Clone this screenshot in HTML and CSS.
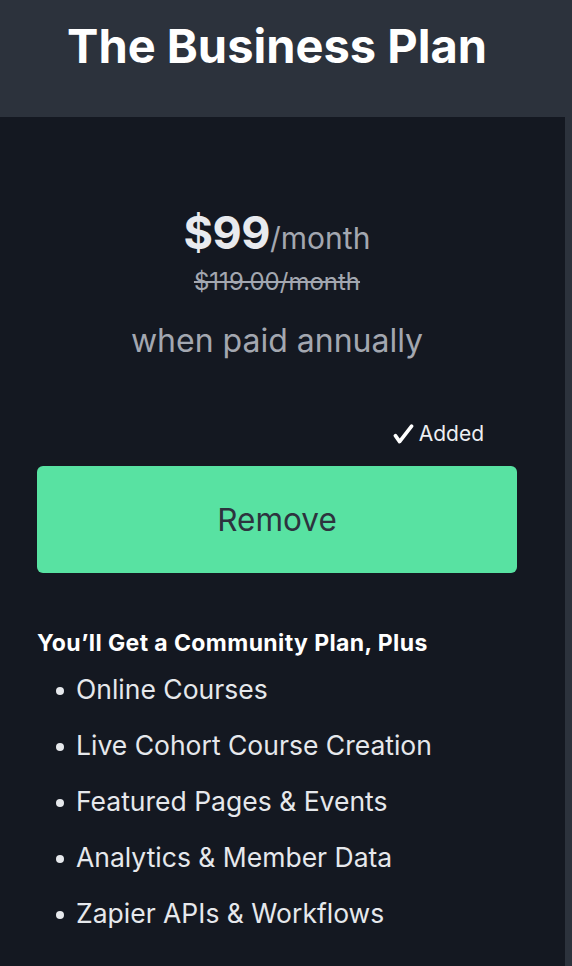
FILE: index.html
```html
<!DOCTYPE html>
<html>
<head>
<meta charset="utf-8">
<link rel="stylesheet" href="styles.css">
</head>
<body>
<div class="page">
  <header class="header">
    <h1 class="title">The Business Plan</h1>
  </header>
  <main class="card">
    <div class="content">
      <div class="price"><span class="amount">$99</span><span class="per">/month</span></div>
      <div class="old">$119.00/month</div>
      <div class="annual">when paid annually</div>
      <div class="added"><svg class="check" viewBox="0 0 21 20" width="21" height="20"><path d="M2.4 11.6 L6.6 17.6 L18.6 2.2" fill="none" stroke="#ffffff" stroke-width="3.6" stroke-linecap="round" stroke-linejoin="round"/></svg><span>Added</span></div>
      <button class="remove">Remove</button>
      <h2 class="plus">You’ll Get a Community Plan, Plus</h2>
      <ul class="features">
        <li>Online Courses</li>
        <li>Live Cohort Course Creation</li>
        <li>Featured Pages &amp; Events</li>
        <li>Analytics &amp; Member Data</li>
        <li>Zapier APIs &amp; Workflows</li>
      </ul>
    </div>
  </main>
</div>
</body>
</html>
```

FILE: styles.css
```css
html, body {
  margin: 0;
  padding: 0;
  background: #2c323c;
}
body {
  font-family: Inter, "Noto Sans", sans-serif;
  width: 572px;
  height: 966px;
  overflow: hidden;
}
.page {
  display: flex;
  flex-direction: column;
}
.header {
  height: 117px;
  box-sizing: border-box;
  padding-top: 18px;
  background: #2c323c;
}
.title {
  width: 480px;
  margin: 0 0 0 37px;
  text-align: center;
  font-size: 47px;
  font-weight: 700;
  color: #ffffff;
  line-height: 56px;
  white-space: nowrap;
}
.card {
  width: 565px;
  height: 849px;
  background: #141821;
}
.content {
  width: 480px;
  margin-left: 37px;
  display: flex;
  flex-direction: column;
}
.price {
  margin-top: 91px;
  text-align: center;
  font-size: 45px;
  line-height: 50px;
  height: 50px;
}
.amount {
  font-size: 45px;
  font-weight: 700;
  color: #e8eaee;
  letter-spacing: -0.5px;
}
.per {
  font-size: 30px;
  color: #a3a7b0;
}
.old {
  margin-top: 10px;
  text-align: center;
  font-size: 24px;
  line-height: 28px;
  color: #a3a7b0;
  text-decoration: line-through;
  text-decoration-thickness: 2px;
}
.annual {
  margin-top: 25px;
  text-align: center;
  font-size: 32px;
  line-height: 40px;
  color: #a3a7b0;
}
.added {
  margin-top: 61px;
  align-self: flex-end;
  margin-right: 33px;
  display: flex;
  align-items: center;
  gap: 5px;
  font-size: 21px;
  line-height: 24px;
  color: #eceef2;
}
.check {
  display: block;
  margin-top: -1px;
}
.remove {
  margin-top: 20px;
  height: 107px;
  width: 480px;
  border: none;
  border-radius: 6px;
  background: #58e2a2;
  color: #2d333e;
  font-family: inherit;
  font-size: 31.5px;
  padding: 0;
}
.plus {
  margin: 56px 0 0;
  font-size: 23px;
  font-weight: 700;
  color: #ffffff;
  line-height: 28px;
  letter-spacing: 0.4px;
  white-space: nowrap;
}
.features {
  list-style: none;
  margin: 4px 0 0;
  padding: 0 0 0 19px;
}
.features li {
  font-size: 26.5px;
  line-height: 56px;
  color: #e6e8ec;
  display: flex;
  align-items: center;
  white-space: nowrap;
}
.features li::before {
  content: "";
  flex: none;
  width: 8px;
  height: 8px;
  border-radius: 50%;
  background: #e6e8ec;
  margin-right: 12px;
  margin-top: 4px;
}
```
